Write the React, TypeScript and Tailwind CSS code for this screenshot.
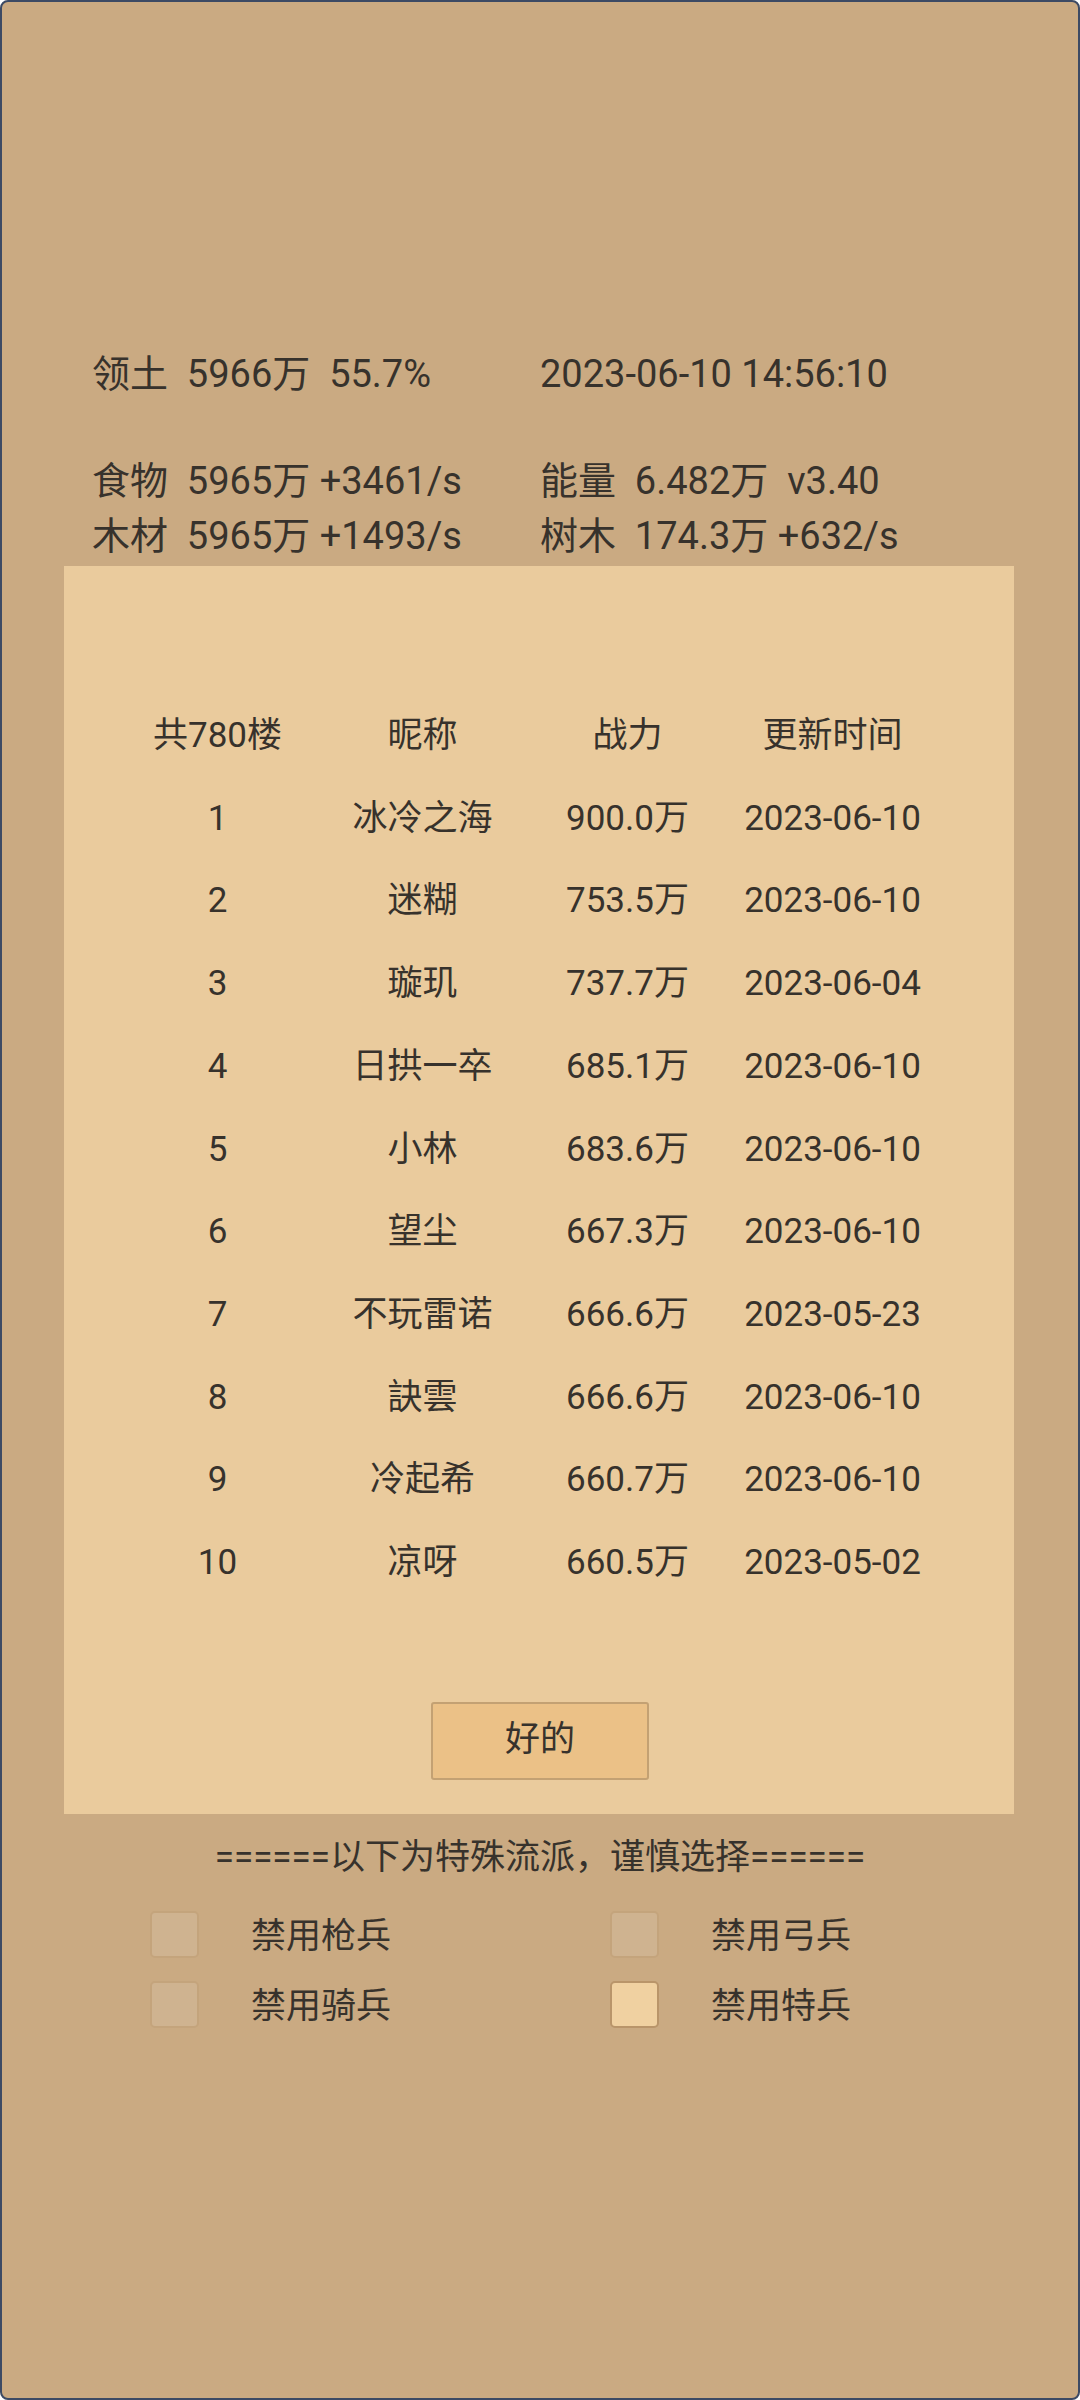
const ranks = [
  { no: '1', name: '冰冷之海', power: '900.0万', date: '2023-06-10' },
  { no: '2', name: '迷糊', power: '753.5万', date: '2023-06-10' },
  { no: '3', name: '璇玑', power: '737.7万', date: '2023-06-04' },
  { no: '4', name: '日拱一卒', power: '685.1万', date: '2023-06-10' },
  { no: '5', name: '小林', power: '683.6万', date: '2023-06-10' },
  { no: '6', name: '望尘', power: '667.3万', date: '2023-06-10' },
  { no: '7', name: '不玩雷诺', power: '666.6万', date: '2023-05-23' },
  { no: '8', name: '訣雲', power: '666.6万', date: '2023-06-10' },
  { no: '9', name: '冷起希', power: '660.7万', date: '2023-06-10' },
  { no: '10', name: '凉呀', power: '660.5万', date: '2023-05-02' },
];

const bans = [
  { label: '禁用枪兵', checked: false },
  { label: '禁用弓兵', checked: false },
  { label: '禁用骑兵', checked: false },
  { label: '禁用特兵', checked: true },
];

function StatRow({ left, right }: { left: string; right: string }) {
  return (
    <div className="flex h-[55px] items-center whitespace-pre text-[38px] leading-[55px]">
      <div className="w-[538px] shrink-0 pl-[90px]">{left}</div>
      <div>{right}</div>
    </div>
  );
}

export default function App() {
  return (
    <div className="h-[2400px] w-[1080px] overflow-hidden rounded-[8px] border-2 border-[#3c4a64] bg-[#caaa82] font-[Roboto,'Noto_Sans_CJK_SC',sans-serif] text-[#37322c]">
      <div className="pt-[345px]">
        <StatRow left="领土  5966万  55.7%" right="2023-06-10 14:56:10" />
        <div className="mt-[52px]">
          <StatRow left="食物  5965万 +3461/s" right="能量  6.482万  v3.40" />
          <StatRow left="木材  5965万 +1493/s" right="树木  174.3万 +632/s" />
        </div>
      </div>

      {/* ranking panel */}
      <div className="ml-[62px] mt-[2px] w-[950px] bg-[#eacb9d] pb-[34px] pt-[129px]">
        <div className="ml-[51px] w-[820px] text-[35px]">
          <div className="grid h-[82.7px] grid-cols-4 items-center text-center">
            <span>共780楼</span>
            <span>昵称</span>
            <span>战力</span>
            <span>更新时间</span>
          </div>
          {ranks.map((r) => (
            <div key={r.no} className="grid h-[82.7px] grid-cols-4 items-center text-center">
              <span>{r.no}</span>
              <span>{r.name}</span>
              <span>{r.power}</span>
              <span>{r.date}</span>
            </div>
          ))}
        </div>
        <div className="mt-[97px] flex justify-center">
          <button className="ml-[2px] flex h-[78px] w-[218px] items-center justify-center rounded-[3px] border-2 border-[#c3a173] bg-[#ebc187] text-[35px] text-[#37322c]">
            好的
          </button>
        </div>
      </div>

      <div className="mt-[16px] h-[55px] text-center text-[35px] leading-[55px]">
        ======以下为特殊流派，谨慎选择======
      </div>

      <div className="mt-[15px] grid grid-cols-[460px_460px] pl-[148px]">
        {bans.map((b) => (
          <div key={b.label} className="flex h-[70px] items-center">
            <div
              className={
                b.checked
                  ? 'h-[47px] w-[49px] shrink-0 rounded-[5px] border-2 border-[#b9956a] bg-[#f0d1a1]'
                  : 'h-[47px] w-[49px] shrink-0 rounded-[5px] border-2 border-[#c4a47c] bg-[#cfb390]'
              }
            />
            <span className="ml-[52px] pt-[6px] text-[35px]">{b.label}</span>
          </div>
        ))}
      </div>
    </div>
  );
}
